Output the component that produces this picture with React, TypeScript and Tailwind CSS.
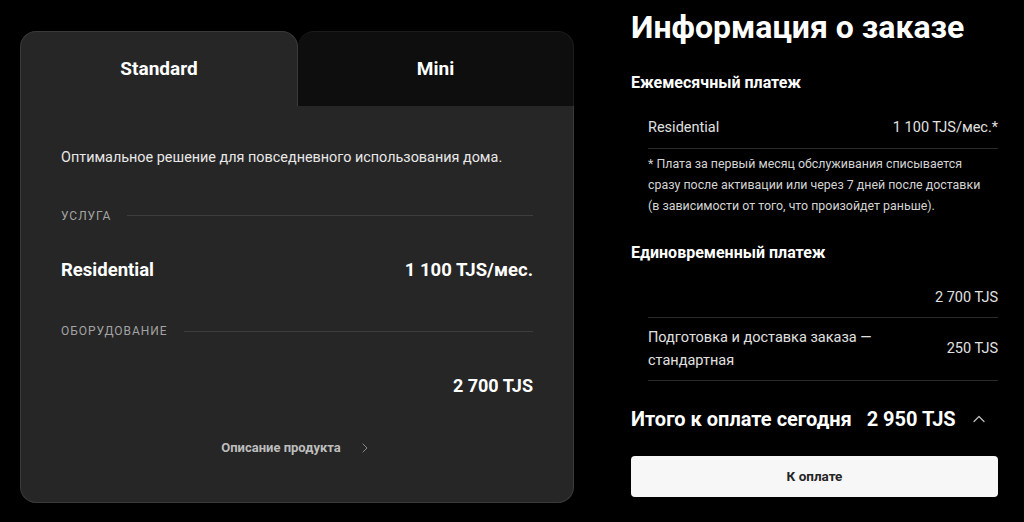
import { ChevronRight, ChevronUp } from "lucide-react";

const font = { fontFamily: "Roboto, 'Noto Sans', sans-serif" };

const SectionLabel = ({ label }: { label: string }) => (
  <div className="flex items-center gap-4">
    <span className="text-[12px] tracking-[0.08em] text-[#a3a3a3]">{label}</span>
    <div className="h-px flex-1 bg-[#3d3d3d]"></div>
  </div>
);

const PlanCard = () => {
  return (
    <div className="w-[554px] flex flex-col">
      {/* Tabs */}
      <div className="flex h-[75px]">
        <button className="w-[278px] rounded-t-2xl border-l border-t border-r border-[#3a3a3a] bg-[#262626] pt-[1px] text-[19px] font-bold text-white">
          Standard
        </button>
        <button className="flex-1 rounded-t-2xl border-t border-r border-[#1c1c1c] bg-[#0e0e0e] pt-[1px] text-[19px] font-bold text-white">
          Mini
        </button>
      </div>

      {/* Body */}
      <div className="h-[397px] rounded-b-2xl border-x border-b border-[#3a3a3a] bg-[#262626] px-10 pt-[41px]">
        <p className="text-[14.4px] text-[#e8e8e8]">
          Оптимальное решение для повседневного использования дома.
        </p>

        <div className="mt-[38px]">
          <SectionLabel label="УСЛУГА" />
        </div>
        <div className="mt-[32px] flex items-center justify-between text-[18.5px] font-bold text-white">
          <span>Residential</span>
          <span>1 100 TJS/мес.</span>
        </div>

        <div className="mt-[38px]">
          <SectionLabel label="ОБОРУДОВАНИЕ" />
        </div>
        <div className="mt-[32px] flex justify-end text-[18px] font-bold text-white">
          2 700 TJS
        </div>

        <div className="mt-[39px] flex items-center justify-center gap-4 text-[13px] font-bold text-[#bdbdbd]">
          <span>Описание продукта</span>
          <ChevronRight className="h-4 w-4 text-[#8a8a8a]" strokeWidth={1.5} />
        </div>
      </div>
    </div>
  );
};

const OrderInfo = () => {
  return (
    <div className="w-[367px] flex flex-col">
      <h1 className="text-[32px] font-bold leading-none text-white">
        Информация о заказе
      </h1>

      <h3 className="mt-[28px] text-[16px] font-bold text-white">Ежемесячный платеж</h3>
      <div className="ml-[17px] mt-[22px] flex items-center justify-between border-b border-[#2a2a2a] pb-[9px] text-[14.5px] text-[#e0e0e0]">
        <span>Residential</span>
        <span>1 100 TJS/мес.*</span>
      </div>
      <p className="ml-[17px] mt-[4px] pr-[12px] text-[12.4px] leading-[21px] text-[#d4d4d4]">
        * Плата за первый месяц обслуживания списывается сразу после активации или через 7 дней после доставки (в зависимости от того, что произойдет раньше).
      </p>

      <h3 className="mt-[25px] text-[16px] font-bold text-white">Единовременный платеж</h3>
      <div className="ml-[17px] mt-[22px] flex justify-end border-b border-[#2a2a2a] pb-[8px] text-[14.5px] text-[#e0e0e0]">
        2 700 TJS
      </div>
      <div className="ml-[17px] flex items-center justify-between border-b border-[#2a2a2a] py-[8px] text-[14.5px] leading-[23px] text-[#e0e0e0]">
        <span className="w-[270px]">Подготовка и доставка заказа — стандартная</span>
        <span>250 TJS</span>
      </div>

      <div className="mt-[23px] flex items-center text-[20px] font-bold text-white">
        <span>Итого к оплате сегодня</span>
        <span className="ml-[15px]">2 950 TJS</span>
        <ChevronUp className="ml-[13px] h-5 w-5 text-[#bdbdbd]" strokeWidth={1.5} />
      </div>

      <button className="mt-[22px] h-[41px] rounded-[4px] bg-[#f7f7f7] text-[13.5px] font-bold text-[#262626]">
        К оплате
      </button>
    </div>
  );
};

export default function App() {
  return (
    <div className="h-[522px] w-[1024px] overflow-hidden bg-black" style={font}>
      <div className="flex gap-[57px] pl-5 pt-[31px]">
        <PlanCard />
        <div className="-mt-[20px]">
          <OrderInfo />
        </div>
      </div>
    </div>
  );
}
